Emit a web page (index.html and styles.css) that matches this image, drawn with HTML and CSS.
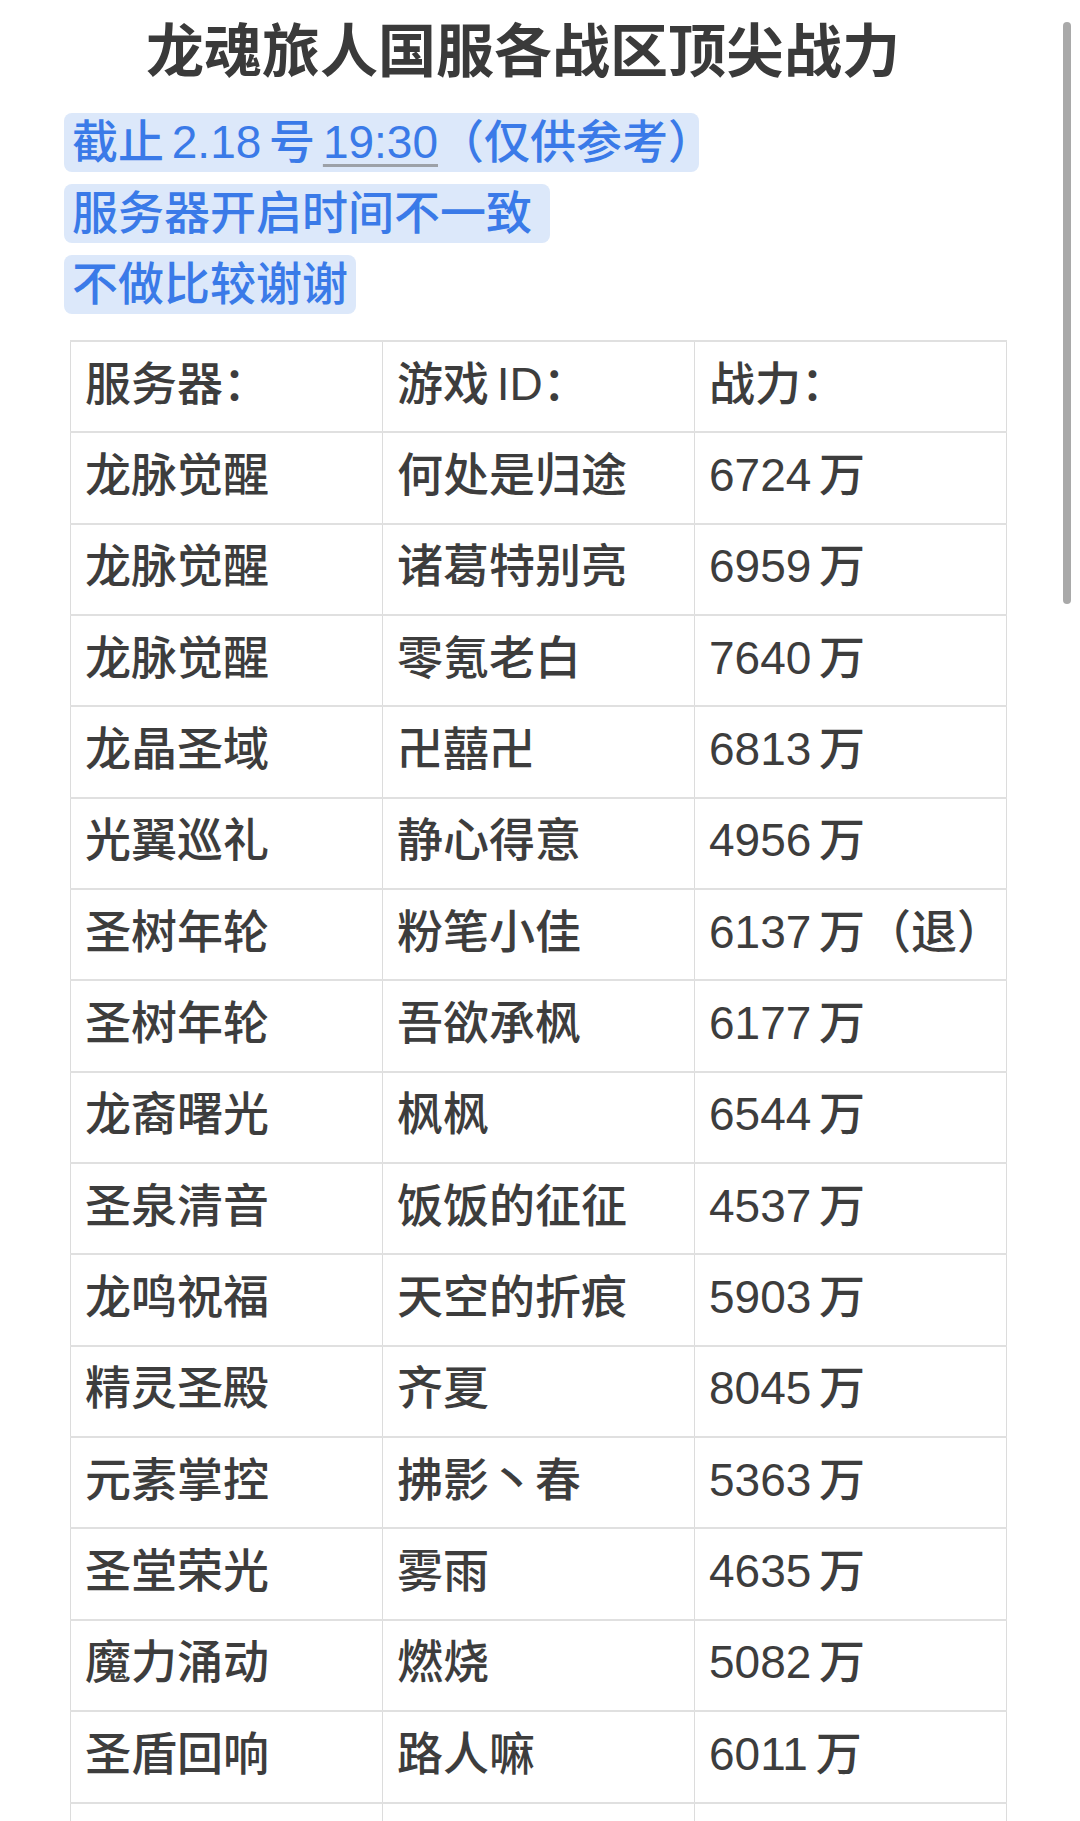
FILE: index.html
```html
<!DOCTYPE html>
<html lang="zh-CN">
<head>
<meta charset="utf-8">
<title>龙魂旅人国服各战区顶尖战力</title>
<link rel="stylesheet" href="styles.css">
</head>
<body>
<div class="page">
  <h1 class="title">龙魂旅人国服各战区顶尖战力</h1>
  <div class="notes">
    <div class="note"><span class="mark m1">截止 2.18 号 <span class="link">19:30</span>（仅供参考<span class="half">）</span></span></div>
    <div class="note"><span class="mark m2">服务器开启时间不一致</span></div>
    <div class="note"><span class="mark m3">不做比较谢谢</span></div>
  </div>
  <table class="rank">
    <colgroup><col><col><col></colgroup>
    <tbody>
      <tr><td>服务器：</td><td>游戏 ID：</td><td>战力：</td></tr>
      <tr><td>龙脉觉醒</td><td>何处是归途</td><td>6724 万</td></tr>
      <tr><td>龙脉觉醒</td><td>诸葛特别亮</td><td>6959 万</td></tr>
      <tr><td>龙脉觉醒</td><td>零氪老白</td><td>7640 万</td></tr>
      <tr><td>龙晶圣域</td><td>卍囍卍</td><td>6813 万</td></tr>
      <tr><td>光翼巡礼</td><td>静心得意</td><td>4956 万</td></tr>
      <tr><td>圣树年轮</td><td>粉笔小佳</td><td>6137 万（退）</td></tr>
      <tr><td>圣树年轮</td><td>吾欲承枫</td><td>6177 万</td></tr>
      <tr><td>龙裔曙光</td><td>枫枫</td><td>6544 万</td></tr>
      <tr><td>圣泉清音</td><td>饭饭的征征</td><td>4537 万</td></tr>
      <tr><td>龙鸣祝福</td><td>天空的折痕</td><td>5903 万</td></tr>
      <tr><td>精灵圣殿</td><td>齐夏</td><td>8045 万</td></tr>
      <tr><td>元素掌控</td><td>拂影丶春</td><td>5363 万</td></tr>
      <tr><td>圣堂荣光</td><td>雾雨</td><td>4635 万</td></tr>
      <tr><td>魔力涌动</td><td>燃烧</td><td>5082 万</td></tr>
      <tr><td>圣盾回响</td><td>路人嘛</td><td>6011 万</td></tr>
      <tr><td>&nbsp;</td><td>&nbsp;</td><td>&nbsp;</td></tr>
    </tbody>
  </table>
  <div class="scroll-indicator"></div>
</div>
</body>
</html>
```

FILE: styles.css
```css
html, body {
  margin: 0;
  padding: 0;
  background: #ffffff;
  overflow: hidden;
}

body {
  font-family: "Liberation Sans", "Noto Sans CJK SC", sans-serif;
  color: #3c3c3c;
}

.page {
  position: relative;
  width: 1080px;
  height: 1821px;
  overflow: hidden;
}

.title {
  margin: 18px 0 0 0;
  width: 1046px;
  text-align: center;
  font-size: 58px;
  line-height: 68px;
  font-weight: 700;
  color: #3a3a3a;
}

.notes {
  margin-top: 27px;
  padding-left: 64px;
  display: flex;
  flex-direction: column;
  align-items: flex-start;
  gap: 12px;
}

.mark {
  display: inline-block;
  height: 59px;
  line-height: 59px;
  padding: 0 6px 0 8px;
  font-size: 46px;
  font-weight: 500;
  color: #3a7ae8;
  background: #dce8fa;
  border-radius: 8px;
  word-spacing: -5px;
  white-space: nowrap;
}

.half {
  font-feature-settings: "halt";
}

.m1 {
  padding-right: 8px;
}

.m2 {
  padding-right: 18px;
}

.m3 {
  padding-right: 8px;
}

.link {
  text-decoration: underline;
  text-decoration-color: #9ca1a8;
  text-decoration-thickness: 3px;
  text-underline-offset: 6px;
}

.rank {
  margin: 26px 0 0 70px;
  width: 937px;
  border-collapse: collapse;
  table-layout: fixed;
}

.rank tr {
  height: 91.35px;
}

.rank td {
  padding: 0 10px 6px 14px;
  font-size: 46px;
  line-height: 56px;
  font-weight: 500;
  color: #3d3d3d;
  vertical-align: middle;
  white-space: nowrap;
  word-spacing: -5px;
  border-top: 2px solid #e0e0e0;
  border-bottom: 2px solid #e0e0e0;
  border-left: 1px solid #dcdcdc;
  border-right: 1px solid #dcdcdc;
}

.scroll-indicator {
  position: absolute;
  left: 1063px;
  top: 22px;
  width: 8px;
  height: 582px;
  border-radius: 4px;
  background: #a9a9a9;
}
```
